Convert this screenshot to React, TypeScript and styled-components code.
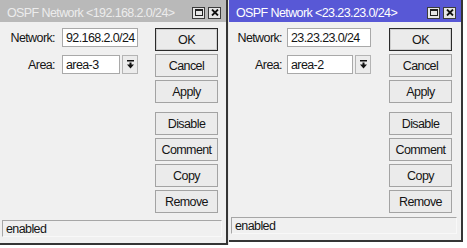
import React from 'react';
import styled, { createGlobalStyle } from 'styled-components';

const GlobalStyle = createGlobalStyle`
  html, body { margin: 0; padding: 0; background: #fff; }
  body {
    font-family: 'Liberation Sans', Arial, sans-serif;
    font-size: 12.5px;
    letter-spacing: -0.6px;
    color: #151515;
  }
`;

const Desktop = styled.div`
  display: flex;
  align-items: flex-start;
  width: 467px;
  height: 248px;
  overflow: hidden;
`;

const Frame = styled.div<{ $w: number; $h: number }>`
  width: ${p => p.$w}px;
  height: ${p => p.$h}px;
  box-sizing: border-box;
  display: flex;
  flex-direction: column;
  background: #f0f0f0;
  border-right: 2px solid #353535;
  border-bottom: 2px solid #353535;
`;

const TitleBar = styled.div<{ $active: boolean }>`
  height: 22px;
  flex: none;
  box-sizing: border-box;
  display: flex;
  align-items: center;
  justify-content: space-between;
  padding: 3px 5px 0 7px;
  background: ${p => (p.$active ? '#5858d6' : '#b9b9b9')};
  color: ${p => (p.$active ? '#ffffff' : '#ececec')};
`;

const TitleText = styled.span`
  white-space: nowrap;
`;

const TitleButtons = styled.div`
  display: flex;
  gap: 3px;
`;

const TitleButton = styled.div`
  width: 13px;
  height: 12px;
  box-sizing: border-box;
  border: 1px solid #3c3c3c;
  background: #e6e6e6;
  display: flex;
  align-items: center;
  justify-content: center;
`;

const Body = styled.div`
  flex: 1;
  display: flex;
  flex-direction: column;
`;

const Main = styled.div`
  display: flex;
  padding-top: 6px;
`;

const Form = styled.div<{ $w: number }>`
  width: ${p => p.$w}px;
  flex: none;
  display: flex;
  flex-direction: column;
  gap: 8px;
`;

const Row = styled.div`
  display: flex;
  align-items: center;
  height: 19px;
`;

const Label = styled.label<{ $w: number; $gap: number }>`
  width: ${p => p.$w}px;
  margin-right: ${p => p.$gap}px;
  text-align: right;
  white-space: nowrap;
`;

const Field = styled.div<{ $w: number }>`
  width: ${p => p.$w}px;
  height: 19px;
  box-sizing: border-box;
  border: 1px solid #a9a9a9;
  background: #fff;
  padding: 0 3px;
  display: flex;
  align-items: center;
  white-space: nowrap;
  overflow: hidden;
`;

const DropButton = styled.div`
  width: 16px;
  height: 19px;
  margin-left: 2px;
  box-sizing: border-box;
  border: 1px solid #b4b4b4;
  background: #ececec;
  display: flex;
  align-items: center;
  justify-content: center;
`;

const Buttons = styled.div`
  width: 63px;
  display: flex;
  flex-direction: column;
  gap: 3px;
`;

const Button = styled.div<{ $primary?: boolean; $spaced?: boolean }>`
  height: 23px;
  box-sizing: border-box;
  border: 1px solid ${p => (p.$primary ? '#2a2a2a' : '#a3a3a3')};
  box-shadow: ${p => (p.$primary ? 'inset 0 0 0 1px #cfcfcf' : 'none')};
  background: #ebebeb;
  margin-top: ${p => (p.$spaced ? '6px' : '0')};
  display: flex;
  align-items: center;
  justify-content: center;
`;

const Status = styled.div`
  margin: auto 4px 6px 2px;
  height: 17px;
  box-sizing: border-box;
  border: 1px solid #a6a6a6;
  border-right-color: #f8f8f8;
  border-bottom-color: #f8f8f8;
  padding-left: 3px;
  display: flex;
  align-items: center;
`;

const Spacer = styled.div`
  width: 1px;
  height: 245px;
  background: #e8e8e8;
  flex: none;
`;

const MaxIcon = () => (
  <svg width="8" height="7" viewBox="0 0 8 7">
    <rect x="0.5" y="0.5" width="7" height="6" fill="none" stroke="#222" />
    <rect x="0" y="0" width="8" height="2" fill="#222" />
  </svg>
);

const CloseIcon = () => (
  <svg width="8" height="7" viewBox="0 0 8 7">
    <path d="M1 0.5 L7 6.5 M7 0.5 L1 6.5" stroke="#111" strokeWidth="1.8" />
  </svg>
);

const DropIcon = () => (
  <svg width="7" height="9" viewBox="0 0 7 9">
    <rect x="0" y="0" width="7" height="1.5" fill="#111" />
    <rect x="2.5" y="2.5" width="2" height="2.5" fill="#111" />
    <path d="M0 4.5 H7 L3.5 8.5 Z" fill="#111" />
  </svg>
);

type WinProps = {
  title: string;
  network: string;
  area: string;
  active?: boolean;
  w: number;
  h: number;
  formW: number;
  labelW: number;
  gap: number;
  netW: number;
  areaW: number;
};

function OspfWindow(p: WinProps) {
  return (
    <Frame $w={p.w} $h={p.h}>
      <TitleBar $active={!!p.active}>
        <TitleText>{p.title}</TitleText>
        <TitleButtons>
          <TitleButton><MaxIcon /></TitleButton>
          <TitleButton><CloseIcon /></TitleButton>
        </TitleButtons>
      </TitleBar>
      <Body>
        <Main>
          <Form $w={p.formW}>
            <Row>
              <Label $w={p.labelW} $gap={p.gap}>Network:</Label>
              <Field $w={p.netW}>{p.network}</Field>
            </Row>
            <Row>
              <Label $w={p.labelW} $gap={p.gap}>Area:</Label>
              <Field $w={p.areaW}>{p.area}</Field>
              <DropButton><DropIcon /></DropButton>
            </Row>
          </Form>
          <Buttons>
            <Button $primary>OK</Button>
            <Button>Cancel</Button>
            <Button>Apply</Button>
            <Button $spaced>Disable</Button>
            <Button>Comment</Button>
            <Button>Copy</Button>
            <Button>Remove</Button>
          </Buttons>
        </Main>
        <Status>enabled</Status>
      </Body>
    </Frame>
  );
}

export default function App() {
  return (
    <>
      <GlobalStyle />
      <Desktop>
        <OspfWindow
          title="OSPF Network <192.168.2.0/24>"
          network="92.168.2.0/24"
          area="area-3"
          w={228}
          h={245}
          formW={155}
          labelW={55}
          gap={7}
          netW={76}
          areaW={58}
        />
        <Spacer />
        <OspfWindow
          active
          title="OSPF Network <23.23.23.0/24>"
          network="23.23.23.0/24"
          area="area-2"
          w={234}
          h={242}
          formW={160}
          labelW={53}
          gap={5}
          netW={84}
          areaW={66}
        />
      </Desktop>
    </>
  );
}
